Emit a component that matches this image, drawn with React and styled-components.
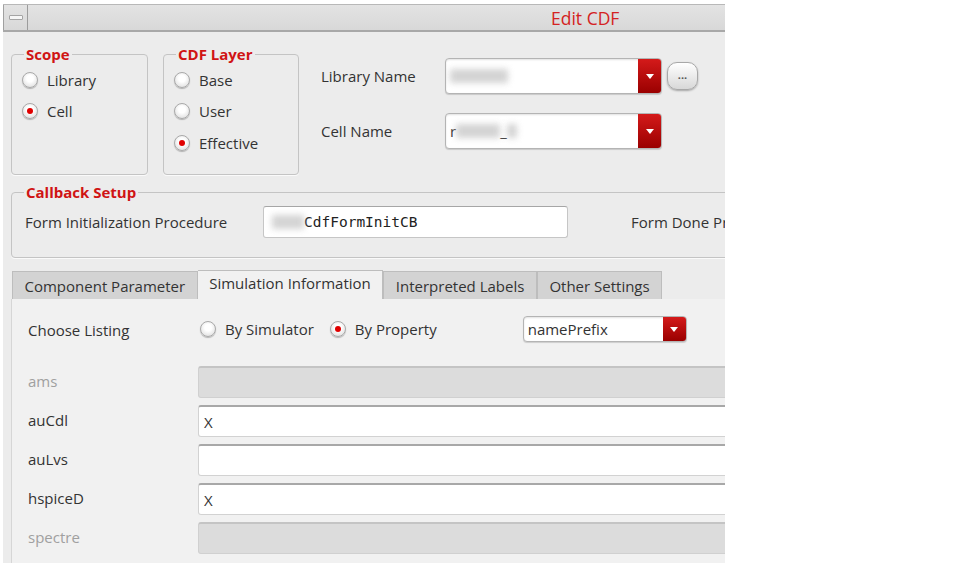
import React from 'react'
import styled, { createGlobalStyle } from 'styled-components'

const GlobalStyle = createGlobalStyle`
    body {
        margin: 0;
        background: #fff;
        font-family: 'Open Sans', 'DejaVu Sans', sans-serif;
        color: #333;
    }
`

const Window = styled.div`
    margin: 4px 0 0 3px;
    width: 722px;
    height: 558px;
    overflow: hidden;
    background: #ececec;
    border-top: 1px solid #b8b8b8;
    display: flex;
    flex-direction: column;
`

const TitleBar = styled.div`
    flex: none;
    height: 25px;
    display: flex;
    align-items: center;
    background: linear-gradient(#e3e3e3, #d8d8d8);
    border-bottom: 2px solid #a8a8a8;
`

const MinButton = styled.div`
    width: 25px;
    height: 25px;
    box-sizing: border-box;
    border-left: 1px solid #a0a0a0;
    border-right: 1px solid #9c9c9c;
    display: flex;
    align-items: center;
    justify-content: center;

    &::after {
        content: '';
        width: 12px;
        height: 3px;
        background: #f6f6f6;
        border: 1px solid #a4a4a4;
        border-radius: 1px;
    }
`

const Title = styled.div`
    margin-left: 523px;
    color: #d42222;
    font-size: 17.5px;
`

const Body = styled.div`
    width: 900px;
    padding-left: 8px;
    display: flex;
    flex-direction: column;
`

const TopRow = styled.div`
    display: flex;
    margin-top: 12px;
`

const Group = styled.fieldset`
    margin: 0 ${({gap}) => gap || 0}px 0 0;
    padding: 0 0 0 10px;
    width: ${({w}) => w}px;
    height: ${({h}) => h}px;
    box-sizing: border-box;
    border: 1px solid #c4c4c4;
    border-radius: 4px;
    box-shadow: 0 1px 0 #fafafa;
`

const Legend = styled.legend`
    margin-left: 2px;
    padding: 0 2px;
    color: #d01414;
    font-weight: 700;
    font-size: 15px;
`

const RadioList = styled.div`
    display: flex;
    flex-direction: column;
`

const RadioItem = styled.label`
    display: flex;
    align-items: center;
    gap: 9px;
    height: ${({h}) => h || 31.5}px;
    font-size: 15px;
    color: #333;
`

const Circle = styled.span`
    flex: none;
    width: 14px;
    height: 14px;
    border-radius: 50%;
    border: 1px solid #a9a9a9;
    background: radial-gradient(circle at 50% 40%, #ffffff 30%, #d6d6d6 100%);
    box-shadow: 0 1px 1px rgba(0, 0, 0, 0.25);
    display: flex;
    align-items: center;
    justify-content: center;

    &::after {
        content: '';
        width: 6px;
        height: 6px;
        border-radius: 50%;
        background: ${({on}) => on ? '#e00000' : 'transparent'};
    }
`

const Radio = ({ on, children, h }) => (
    <RadioItem h={h}>
        <Circle on={on ? 1 : 0} />
        {children}
    </RadioItem>
)

const NameGrid = styled.div`
    margin: 14px 0 0 22px;
    display: grid;
    grid-template-columns: 124px auto auto;
    grid-auto-rows: 36px;
    row-gap: 19px;
    align-items: center;
    align-self: flex-start;
    font-size: 15px;
`

const Combo = styled.div`
    width: ${({w}) => w}px;
    height: ${({h}) => h}px;
    box-sizing: border-box;
    display: flex;
    background: #fff;
    border: 1px solid #b4b4b4;
    border-radius: 4px;
    box-shadow: inset 0 1px 2px rgba(0, 0, 0, 0.12), 0 1px 1px rgba(0, 0, 0, 0.15);
    overflow: hidden;
`

const ComboText = styled.div`
    flex: 1;
    display: flex;
    align-items: center;
    padding-left: 4px;
    font-size: 15px;
    color: #333;
`

const DropButton = styled.div`
    flex: none;
    width: 23px;
    background: linear-gradient(#d41a1a, #9a0000);
    display: flex;
    align-items: center;
    justify-content: center;

    &::after {
        content: '';
        border-left: 4px solid transparent;
        border-right: 4px solid transparent;
        border-top: 5px solid #fff;
    }
`

const Blur = styled.span`
    display: inline-block;
    width: ${({w}) => w}px;
    height: 14px;
    background: #c9c9c9;
    filter: blur(3px);
    opacity: 0.8;
`

const DotsButton = styled.div`
    margin-left: 5px;
    width: 31px;
    height: 28px;
    box-sizing: border-box;
    border: 1px solid #a8a8a8;
    border-radius: 10px;
    background: linear-gradient(#ffffff, #d8d8d8);
    box-shadow: 0 1px 2px rgba(0, 0, 0, 0.3);
    font-size: 11px;
    font-weight: 700;
    line-height: 24px;
    text-align: center;
    color: #555;
`

const CallbackRow = styled.div`
    display: flex;
    align-items: center;
    height: 40px;
    padding-left: 3px;
    font-size: 15px;
`

const CallbackLabel = styled.div`
    width: 238px;
`

const TextInput = styled.div`
    width: 305px;
    height: 32px;
    box-sizing: border-box;
    display: flex;
    align-items: center;
    padding-left: 8px;
    background: #fff;
    border: 1px solid #c6c6c6;
    border-top-color: #a6a6a6;
    border-radius: 3px;
    font-family: 'DejaVu Sans Mono', monospace;
    font-size: 14.5px;
    color: #222;
`

const DoneLabel = styled.div`
    margin-left: 63px;
    white-space: nowrap;
`

const TabBar = styled.div`
    margin-top: 12px;
    display: flex;
    align-items: flex-end;
    height: 29px;
    padding-left: 1px;
`

const Tab = styled.div`
    height: ${({active}) => active ? 29 : 28}px;
    box-sizing: border-box;
    padding: 0 11.5px;
    display: flex;
    align-items: center;
    font-size: 15px;
    color: #333;
    background: ${({active}) => active ? '#f1f1f1' : '#d3d3d3'};
    border: 1px solid #bdbdbd;
    border-bottom: none;
    border-left: ${({active}) => active ? 'none' : '1px solid #bdbdbd'};
    padding-bottom: ${({active}) => active ? 4 : 0}px;
`

const Panel = styled.div`
    height: 266px;
    background: #f1f1f1;
    border-left: 1px solid #d6d6d6;
    padding: 17px 0 0 16px;
    box-sizing: border-box;
    font-size: 15px;
`

const ListingRow = styled.div`
    display: flex;
    align-items: center;
    height: 26px;
`

const ListingLabel = styled.div`
    width: 172px;
    margin-top: 2px;
`

const Spacer = styled.span`
    width: ${({w}) => w}px;
`

const ParamList = styled.div`
    margin-top: 24px;
    display: grid;
    grid-template-columns: 170px 540px;
    grid-auto-rows: 32px;
    row-gap: 7px;
    align-items: center;
`

const ParamLabel = styled.div`
    color: ${({off}) => off ? '#a0a0a0' : '#333'};
    margin-top: -3px;
`

const Field = styled.div`
    height: 32px;
    box-sizing: border-box;
    display: flex;
    align-items: center;
    padding-left: 5px;
    border-radius: 3px;
    background: ${({off}) => off ? '#dcdcdc' : '#fff'};
    border: 1px solid ${({off}) => off ? '#d0d0d0' : '#d2d2d2'};
    border-top: 2px solid ${({off}) => off ? '#c4c4c4' : '#a8a8a8'};
    color: #333;
`

const params = [
    { name: 'ams', off: true },
    { name: 'auCdl', value: 'X' },
    { name: 'auLvs', value: '' },
    { name: 'hspiceD', value: 'X' },
    { name: 'spectre', off: true },
]

const tabs = ['Component Parameter', 'Simulation Information', 'Interpreted Labels', 'Other Settings']

const App = () => {
    return (
        <>
            <GlobalStyle />
            <Window>
                <TitleBar>
                    <MinButton />
                    <Title>Edit CDF</Title>
                </TitleBar>

                <Body>
                    <TopRow>
                        <Group w={137} h={131} gap={15}>
                            <Legend>Scope</Legend>
                            <RadioList>
                                <Radio>Library</Radio>
                                <Radio on>Cell</Radio>
                            </RadioList>
                        </Group>

                        <Group w={136} h={131}>
                            <Legend>CDF Layer</Legend>
                            <RadioList>
                                <Radio>Base</Radio>
                                <Radio>User</Radio>
                                <Radio on>Effective</Radio>
                            </RadioList>
                        </Group>

                        <NameGrid>
                            <span>Library Name</span>
                            <Combo w={217} h={36}>
                                <ComboText><Blur w={58} /></ComboText>
                                <DropButton />
                            </Combo>
                            <DotsButton>...</DotsButton>

                            <span>Cell Name</span>
                            <Combo w={217} h={36}>
                                <ComboText>r<Blur w={44} />_<Blur w={10} /></ComboText>
                                <DropButton />
                            </Combo>
                        </NameGrid>
                    </TopRow>

                    <Group w={880} h={76} style={{ marginTop: 7 }}>
                        <Legend>Callback Setup</Legend>
                        <CallbackRow>
                            <CallbackLabel>Form Initialization Procedure</CallbackLabel>
                            <TextInput><Blur w={32} />CdfFormInitCB</TextInput>
                            <DoneLabel>Form Done Procedure</DoneLabel>
                        </CallbackRow>
                    </Group>

                    <TabBar>
                        {tabs.map((t, i) => (
                            <Tab key={t} active={i === 1 ? 1 : 0}>{t}</Tab>
                        ))}
                    </TabBar>

                    <Panel>
                        <ListingRow>
                            <ListingLabel>Choose Listing</ListingLabel>
                            <Radio h={26}>By Simulator</Radio>
                            <Spacer w={16} />
                            <Radio h={26} on>By Property</Radio>
                            <Spacer w={86} />
                            <Combo w={164} h={26}>
                                <ComboText>namePrefix</ComboText>
                                <DropButton />
                            </Combo>
                        </ListingRow>

                        <ParamList>
                            {params.map(p => (
                                <React.Fragment key={p.name}>
                                    <ParamLabel off={p.off ? 1 : 0}>{p.name}</ParamLabel>
                                    <Field off={p.off ? 1 : 0}>{p.value}</Field>
                                </React.Fragment>
                            ))}
                        </ParamList>
                    </Panel>
                </Body>
            </Window>
        </>
    )
}

export default App
